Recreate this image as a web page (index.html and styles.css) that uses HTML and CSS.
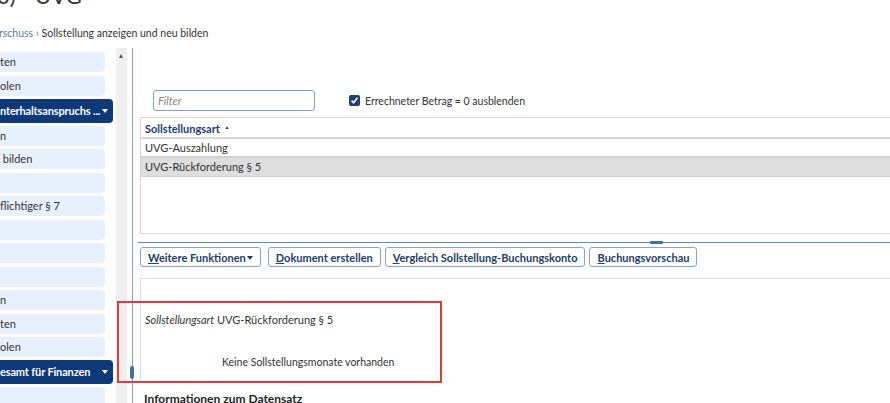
FILE: index.html
```html
<!DOCTYPE html>
<html lang="de">
<head>
    <meta charset="UTF-8">
    <meta name="viewport" content="width=device-width, initial-scale=1.0">
    <title>Sollstellung anzeigen und neu bilden</title>
    <link rel="stylesheet" href="styles.css">
</head>
<body>
    <div class="page">
        <div class="title">0) - UVG</div>
        <div class="crumbs"><a href="#">rschuss</a> <span class="sep">›</span> Sollstellung anzeigen und neu bilden</div>

        <div class="workspace">
            <!-- Navigation links -->
            <nav class="sidebar">
                <ul class="nav-list">
                    <li>ten</li>
                    <li>olen</li>
                    <li class="group">nterhaltsanspruchs ...<span class="caret"></span></li>
                    <li>n</li>
                    <li>&nbsp;bilden</li>
                    <li></li>
                    <li>flichtiger § 7</li>
                    <li></li>
                    <li></li>
                    <li></li>
                    <li>n</li>
                    <li>ten</li>
                    <li>olen</li>
                    <li class="group">esamt für Finanzen<span class="caret"></span></li>
                    <li></li>
                </ul>
                <div class="scroll-track"><span class="scroll-up"></span></div>
            </nav>
            <div class="splitter"><span class="grip"></span></div>

            <!-- Inhalt -->
            <main class="content">
                <div class="toolbar">
                    <input type="text" class="filter" placeholder="Filter">
                    <label class="check">
                        <span class="box">
                            <svg width="9" height="9" viewBox="0 0 9 9"><path d="M1.6 4.6 L3.6 6.8 L7.4 1.8" fill="none" stroke="#fff" stroke-width="1.6"/></svg>
                        </span>
                        Errechneter Betrag = 0 ausblenden
                    </label>
                </div>

                <div class="grid">
                    <div class="grid-head">Sollstellungsart <span class="sort">▲</span></div>
                    <div class="grid-row">UVG-Auszahlung</div>
                    <div class="grid-row selected">UVG-Rückforderung § 5</div>
                </div>

                <div class="hsplit"><span class="grip"></span></div>

                <div class="actions">
                    <button class="btn menu-btn"><u>W</u>eitere Funktionen<span class="caret"></span></button>
                    <button class="btn"><u>D</u>okument erstellen</button>
                    <button class="btn"><u>V</u>ergleich Sollstellung-Buchungskonto</button>
                    <button class="btn"><u>B</u>uchungsvorschau</button>
                </div>

                <div class="detail">
                    <div class="detail-row">
                        <span class="label">Sollstellungsart</span>
                        <span class="value">UVG-Rückforderung § 5</span>
                    </div>
                    <div class="empty">Keine Sollstellungsmonate vorhanden</div>
                </div>

                <h3 class="info">Informationen zum Datensatz</h3>
            </main>
        </div>

        <div class="highlight"></div>
    </div>
</body>
</html>
```

FILE: styles.css
```css
* {
    box-sizing: border-box;
}

html, body {
    margin: 0;
    padding: 0;
}

body {
    font-family: Lato, "Open Sans", sans-serif;
    font-size: 11px;
    color: #333;
    background-color: #fff;
    width: 890px;
    height: 403px;
    overflow: hidden;
}

.page {
    display: flow-root;
    position: relative;
    height: 403px;
}

.title {
    font-size: 22px;
    line-height: 22px;
    margin-top: -15px;
    margin-left: -3px;
    color: #333;
}

.crumbs {
    margin: 19px 0 0 -1px;
    font-size: 10.5px;
    line-height: 14px;
    height: 14px;
}

.crumbs a {
    color: #5a7bab;
    text-decoration: none;
}

.crumbs .sep {
    color: #777;
}

.workspace {
    display: flex;
    margin-top: 8px;
    height: 355px;
}

/* Navigation */
.sidebar {
    display: flex;
    flex-shrink: 0;
}

.nav-list {
    list-style: none;
    margin: 0 0 0 -8px;
    padding: 4px 0 0;
    width: 121px;
}

.nav-list li {
    height: 20px;
    line-height: 20px;
    margin-bottom: 3.5px;
    margin-right: 8px;
    padding-left: 8px;
    background-color: #e7f1fd;
    border-radius: 4px;
    white-space: nowrap;
    overflow: hidden;
}

.nav-list li.group {
    position: relative;
    height: 24px;
    line-height: 24px;
    margin-right: 0;
    margin-top: -0.5px;
    margin-bottom: 3px;
    background-color: #0c3a78;
    color: #fff;
    font-weight: bold;
    letter-spacing: -0.15px;
}

.nav-list li.group .caret {
    position: absolute;
    right: 5px;
    top: 10px;
    border-left: 3.5px solid transparent;
    border-right: 3.5px solid transparent;
    border-top: 4px solid #fff;
}

.scroll-track {
    position: relative;
    width: 11px;
    margin-left: 3px;
    background-color: #efefef;
}

.scroll-up {
    position: absolute;
    left: 3px;
    top: 6px;
    border-left: 2.5px solid transparent;
    border-right: 2.5px solid transparent;
    border-bottom: 4px solid #555;
}

.splitter {
    position: relative;
    width: 1px;
    margin-left: 5px;
    background-color: #7d9fcc;
}

.splitter .grip {
    position: absolute;
    left: -2px;
    top: 318px;
    width: 4px;
    height: 13px;
    border-radius: 2px;
    background-color: #3f6eaa;
}

/* Inhalt */
.content {
    flex: 1;
    min-width: 0;
    margin-left: 7px;
    padding-top: 42px;
}

.toolbar {
    display: flex;
    align-items: center;
    height: 21px;
}

.filter {
    width: 162px;
    height: 21px;
    margin-left: 13px;
    padding: 0 4px;
    font-family: inherit;
    font-size: 11px;
    border: 1px solid #7f9ec8;
    border-radius: 3px;
}

.filter::placeholder {
    color: #888;
    font-style: italic;
}

.check {
    display: flex;
    align-items: center;
    margin-left: 34px;
    font-size: 10.5px;
}

.check .box {
    display: flex;
    align-items: center;
    justify-content: center;
    width: 11px;
    height: 11px;
    margin-right: 5px;
    border-radius: 2px;
    background-color: #1b3f78;
}

.grid {
    width: 800px;
    height: 117px;
    margin-top: 6px;
    border: 1px solid #d6d6d6;
}

.grid-head {
    height: 21px;
    line-height: 19px;
    padding-left: 4px;
    font-weight: bold;
    color: #1d3d70;
    border-bottom: 2px solid #d8d8d8;
}

.grid-head .sort {
    font-size: 5px;
    vertical-align: 4px;
    margin-left: 2px;
}

.grid-row {
    height: 19px;
    line-height: 17px;
    padding-left: 4px;
    border-bottom: 2px solid #d2d2d2;
}

.grid-row.selected {
    background-color: #dedede;
    border-bottom-width: 1px;
}

.hsplit {
    position: relative;
    height: 1px;
    margin: 8px 0 0 -2px;
    width: 760px;
    background-color: #5d8bc5;
}

.hsplit .grip {
    position: absolute;
    left: 512px;
    top: -1px;
    width: 13px;
    height: 3px;
    border-radius: 1px;
    background-color: #3f6eaa;
}

.actions {
    display: flex;
    gap: 4px;
    margin-top: 4px;
}

.btn {
    height: 20px;
    padding: 0 7px;
    font-family: inherit;
    font-size: 11px;
    font-weight: bold;
    color: #1e3c6d;
    background-color: #fff;
    border: 1px solid #8aa4c8;
    border-radius: 3px;
}

.btn u {
    text-underline-offset: 1px;
}

.menu-btn {
    margin-right: 3px;
}

.menu-btn .caret {
    display: inline-block;
    margin-left: 1px;
    vertical-align: 2px;
    border-left: 3px solid transparent;
    border-right: 3px solid transparent;
    border-top: 4px solid #1e3c6d;
}

.detail {
    width: 800px;
    height: 103px;
    margin-top: 11px;
    padding: 33px 0 0 4px;
    border-top: 1px solid #dcdcdc;
    border-left: 1px solid #dcdcdc;
}

.detail-row {
    display: flex;
    line-height: 16px;
}

.detail-row .label {
    width: 72px;
    font-style: italic;
}

.empty {
    margin: 26px 0 0 77px;
    font-size: 10.5px;
    line-height: 16px;
}

.info {
    margin: 11px 0 0 4px;
    font-size: 12px;
    line-height: 14px;
    color: #222;
}

/* Markierung */
.highlight {
    position: absolute;
    left: 117px;
    top: 301px;
    width: 325px;
    height: 82px;
    border: 2px solid #e8363a;
}
```
